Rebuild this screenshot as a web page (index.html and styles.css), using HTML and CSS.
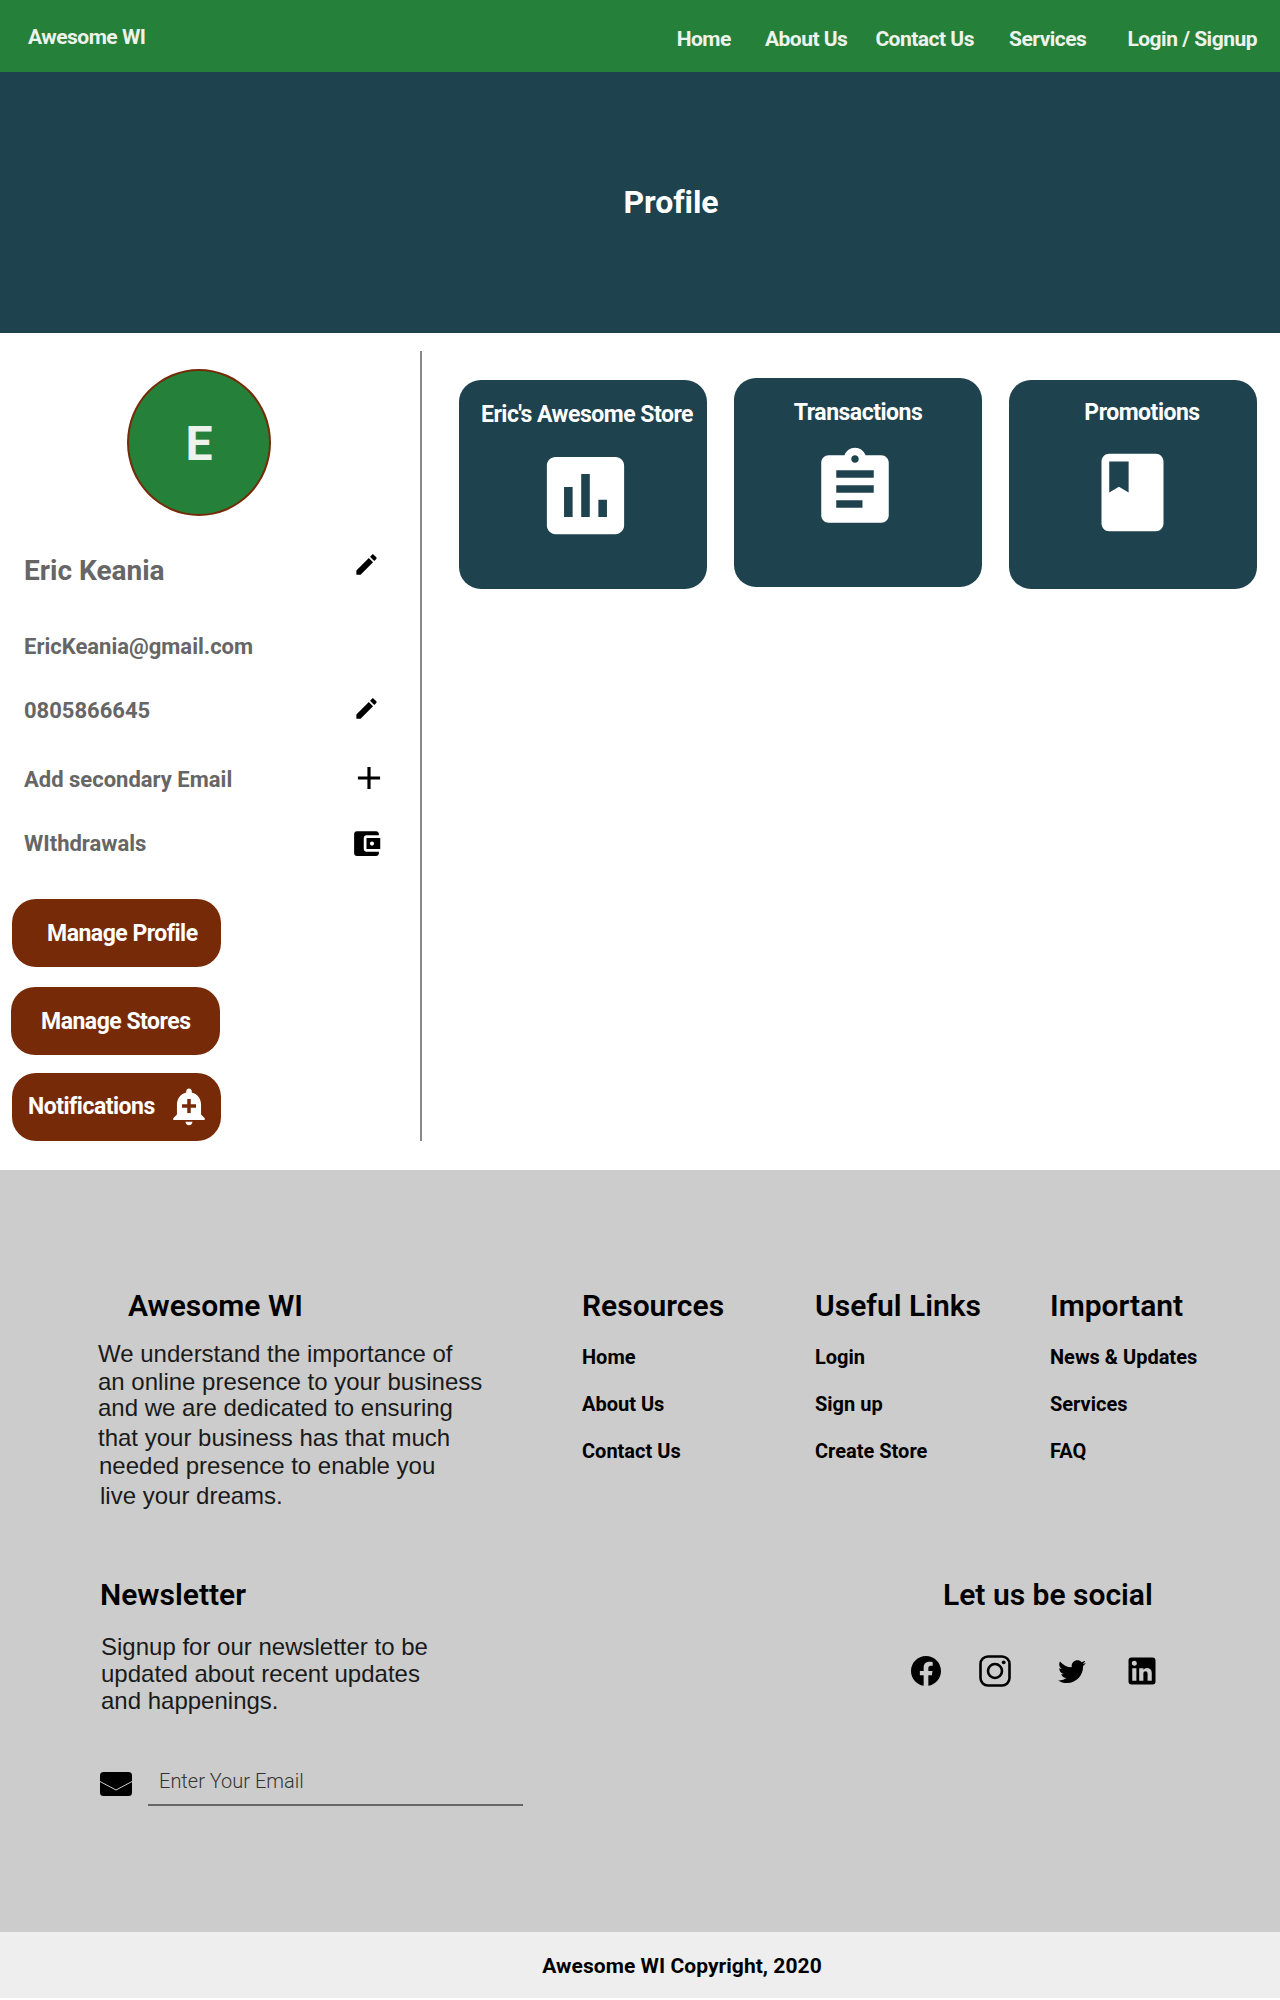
FILE: index.html
```html
<!DOCTYPE html>
<html lang="en">
<head>
<meta charset="utf-8">
<title>Profile - Awesome WI</title>
<link rel="stylesheet" href="styles.css">
</head>
<body>
<header class="navbar">
  <a class="brand">Awesome WI</a>
  <nav class="nav-links">
    <a class="nav-home">Home</a>
    <a class="nav-about">About Us</a>
    <a class="nav-contact">Contact Us</a>
    <a class="nav-services">Services</a>
    <a class="nav-login">Login / Signup</a>
  </nav>
</header>
<section class="hero"><h1>Profile</h1></section>
<main class="profile">
  <aside class="sidebar">
    <div class="avatar">E</div>
    <div class="row row-name"><span>Eric Keania</span>
      <svg class="icon-edit icon-edit-high" viewBox="0 0 24 24"><path d="M3 17.25V21h3.75L17.81 9.94l-3.75-3.75L3 17.25zM20.71 7.04c.39-.39.39-1.02 0-1.41l-2.34-2.34c-.39-.39-1.02-.39-1.41 0l-1.83 1.83 3.75 3.75 1.83-1.83z"/></svg>
    </div>
    <div class="row row-email"><span>EricKeania@gmail.com</span></div>
    <div class="row row-phone"><span>0805866645</span>
      <svg class="icon-edit" viewBox="0 0 24 24"><path d="M3 17.25V21h3.75L17.81 9.94l-3.75-3.75L3 17.25zM20.71 7.04c.39-.39.39-1.02 0-1.41l-2.34-2.34c-.39-.39-1.02-.39-1.41 0l-1.83 1.83 3.75 3.75 1.83-1.83z"/></svg>
    </div>
    <div class="row row-add"><span>Add secondary Email</span>
      <svg class="icon-add" viewBox="0 0 24 24"><path d="M19 13h-6v6h-2v-6H5v-2h6V5h2v6h6v2z"/></svg>
    </div>
    <div class="row row-withdraw"><span>WIthdrawals</span>
      <svg class="icon-wallet" viewBox="0 0 24 24"><path d="M21 18v1c0 1.1-.9 2-2 2H5c-1.11 0-2-.9-2-2V5c0-1.1.89-2 2-2h14c1.1 0 2 .9 2 2v1h-9c-1.11 0-2 .9-2 2v8c0 1.1.89 2 2 2h9zm-9-2h10V8H12v8zm4-2.5c-.83 0-1.5-.67-1.5-1.5s.67-1.5 1.5-1.5 1.5.67 1.5 1.5-.67 1.5-1.5 1.5z"/></svg>
    </div>
    <a class="btn btn-profile">Manage Profile</a>
    <a class="btn btn-stores">Manage Stores</a>
    <a class="btn btn-notify"><span>Notifications</span>
      <svg class="icon-bell" viewBox="0 0 24 24"><path d="M10.01 21.01c0 1.1.89 1.99 1.99 1.99s1.99-.89 1.99-1.99h-3.98zm8.87-4.19V11c0-3.25-2.25-5.97-5.29-6.69v-.72C13.59 2.71 12.88 2 12 2s-1.59.71-1.59 1.59v.72C7.37 5.03 5.12 7.75 5.12 11v5.82L3 18.94V20h18v-1.06l-2.12-2.12zM16 13.01h-3v3h-2v-3H8V11h3V8h2v3h3v2.01z"/></svg>
    </a>
  </aside>
  <section class="cards">
    <article class="card card-store">
      <h2>Eric's Awesome Store</h2>
      <svg viewBox="0 0 24 24"><path d="M19 3H5c-1.1 0-2 .9-2 2v14c0 1.1.9 2 2 2h14c1.1 0 2-.9 2-2V5c0-1.1-.9-2-2-2zM9 17H7v-7h2v7zm4 0h-2V7h2v10zm4 0h-2v-4h2v4z"/></svg>
    </article>
    <article class="card card-trans">
      <h2>Transactions</h2>
      <svg viewBox="0 0 24 24"><path d="M19 3h-4.18C14.4 1.84 13.3 1 12 1c-1.3 0-2.4.84-2.82 2H5c-1.1 0-2 .9-2 2v14c0 1.1.9 2 2 2h14c1.1 0 2-.9 2-2V5c0-1.1-.9-2-2-2zm-7 0c.55 0 1 .45 1 1s-.45 1-1 1-1-.45-1-1 .45-1 1-1zm2 14H7v-2h7v2zm3-4H7v-2h10v2zm0-4H7V7h10v2z"/></svg>
    </article>
    <article class="card card-promo">
      <h2>Promotions</h2>
      <svg viewBox="0 0 24 24"><path d="M18 2H6c-1.1 0-2 .9-2 2v16c0 1.1.9 2 2 2h12c1.1 0 2-.9 2-2V4c0-1.1-.9-2-2-2zM6 4h5v8l-2.5-1.5L6 12V4z"/></svg>
    </article>
  </section>
</main>
<footer class="footer">
  <div class="footer-top">
    <div class="about">
      <h3 class="about-title">Awesome WI</h3>
      <p class="about-text">
        <span class="line">We understand the importance of</span>
        <span class="line gap-1">an online presence to your business</span>
        <span class="line pull-1">and we are dedicated to ensuring</span>
        <span class="line gap-3">that your business has that much</span>
        <span class="line gap-1 nudge-1">needed presence to enable you</span>
        <span class="line gap-3 nudge-2">live your dreams.</span>
      </p>
    </div>
    <div class="links links-resources">
      <h3>Resources</h3>
      <ul><li>Home</li><li>About Us</li><li>Contact Us</li></ul>
    </div>
    <div class="links links-useful">
      <h3>Useful Links</h3>
      <ul><li>Login</li><li>Sign up</li><li>Create Store</li></ul>
    </div>
    <div class="links">
      <h3>Important</h3>
      <ul><li>News &amp; Updates</li><li>Services</li><li>FAQ</li></ul>
    </div>
  </div>
  <div class="footer-bottom">
    <div class="newsletter">
      <h3>Newsletter</h3>
      <p class="news-text">
        <span class="line">Signup for our newsletter to be</span>
        <span class="line">updated about recent updates</span>
        <span class="line">and happenings.</span>
      </p>
      <form class="news-form">
        <svg class="icon-mail" viewBox="0 0 32 24"><rect width="32" height="24" rx="3.5"/><path d="M0 9.5l16 8.5 16-8.5" fill="none" stroke="#ccc" stroke-width="1"/></svg>
        <input class="news-input" type="text" placeholder="Enter Your Email">
      </form>
    </div>
    <div class="social">
      <h3>Let us be social</h3>
      <div class="social-icons">
        <svg class="s-fb" viewBox="0 0 24 24"><path d="M12 2C6.477 2 2 6.477 2 12c0 4.991 3.657 9.128 8.438 9.879V14.89h-2.54V12h2.54V9.797c0-2.506 1.492-3.89 3.777-3.89 1.094 0 2.238.195 2.238.195v2.46h-1.26c-1.243 0-1.63.771-1.63 1.562V12h2.773l-.443 2.89h-2.33v6.989C18.343 21.129 22 16.99 22 12c0-5.523-4.477-10-10-10z"/></svg>
        <svg class="s-ig" viewBox="0 0 32 32"><rect x="1.5" y="1.5" width="29" height="29" rx="7.5" fill="none" stroke="#000" stroke-width="2.6"/><circle cx="16" cy="16" r="7" fill="none" stroke="#000" stroke-width="2.6"/><circle cx="24.7" cy="7.3" r="1.9"/></svg>
        <svg class="s-tw" viewBox="0 0 24 24"><path d="M22.46 6c-.77.35-1.6.58-2.46.69.88-.53 1.56-1.37 1.88-2.38-.83.5-1.75.85-2.72 1.05C18.37 4.5 17.26 4 16 4c-2.35 0-4.27 1.92-4.27 4.29 0 .34.04.67.11.98C8.28 9.09 5.11 7.38 3 4.79c-.37.63-.58 1.37-.58 2.15 0 1.49.75 2.81 1.91 3.56-.71 0-1.37-.2-1.95-.5v.03c0 2.08 1.48 3.82 3.44 4.21a4.22 4.22 0 0 1-1.93.07 4.28 4.28 0 0 0 4 2.98 8.521 8.521 0 0 1-5.33 1.84c-.34 0-.68-.02-1.02-.06C3.44 20.29 5.7 21 8.12 21 16 21 20.33 14.46 20.33 8.79c0-.19 0-.37-.01-.56.84-.6 1.56-1.36 2.14-2.23z"/></svg>
        <svg class="s-in" viewBox="0 0 24 24"><path d="M19 3a2 2 0 0 1 2 2v14a2 2 0 0 1-2 2H5a2 2 0 0 1-2-2V5a2 2 0 0 1 2-2h14m-.5 15.5v-5.3a3.26 3.26 0 0 0-3.26-3.26c-.85 0-1.84.52-2.32 1.3v-1.11h-2.79v8.37h2.79v-4.93c0-.77.62-1.4 1.39-1.4a1.4 1.4 0 0 1 1.4 1.4v4.93h2.79M6.88 8.56a1.68 1.68 0 0 0 1.68-1.68c0-.93-.75-1.69-1.68-1.69a1.69 1.69 0 0 0-1.69 1.69c0 .93.76 1.68 1.69 1.68m1.39 9.94v-8.37H5.5v8.37h2.77z"/></svg>
      </div>
    </div>
  </div>
</footer>
<div class="copyright">Awesome WI Copyright, 2020</div>
</body>
</html>
```

FILE: styles.css
```css
* { box-sizing: border-box; }
body { margin: 0; background: #fff; font-family: "Roboto", "Liberation Sans", sans-serif; color: #000; }
h1, h2, h3, p, ul { margin: 0; padding: 0; }
ul { list-style: none; }
svg { display: block; flex: none; }

.navbar { height: 72px; background: #258039; display: flex; justify-content: space-between; color: #eef2ec; font-weight: 700; }
.brand { font-size: 21px; letter-spacing: -0.5px; margin: 25px 0 0 28px; line-height: 24px; }
.nav-links { display: flex; font-size: 21px; letter-spacing: -0.5px; line-height: 24px; padding-top: 27px; padding-right: 23px; }
.nav-about { margin-left: 34px; }
.nav-contact { margin-left: 28px; }
.nav-services { margin-left: 35px; }
.nav-login { margin-left: 41px; }

.hero { height: 261px; background: #1e424e; display: flex; justify-content: center; padding: 111px 0 0 0; }
.hero h1 { font-size: 32px; line-height: 38px; font-weight: 700; color: #fff; margin-left: 62px; letter-spacing: -0.1px; }

.profile { display: flex; align-items: flex-start; padding: 18px 0 29px; }
.sidebar { width: 422px; height: 790px; border-right: 2px solid #888; display: flex; flex-direction: column; align-items: flex-start; flex: none; }
.avatar { width: 144px; height: 147px; margin: 18px 0 0 127px; padding-top: 2px; border-radius: 50%; background: #258039; border: 2px solid #762a08; color: #eef2ec; font-size: 48px; font-weight: 700; display: flex; align-items: center; justify-content: center; }
.row { width: 380px; height: 48px; padding-left: 24px; display: flex; align-items: center; justify-content: space-between; color: #666; font-size: 22px; font-weight: 700; }
.row-name { margin-top: 30px; font-size: 28px; }
.row-email { margin-top: 28px; }
.row-phone { margin-top: 16px; }
.row-add { margin-top: 21px; }
.row-withdraw { margin-top: 16px; }
.icon-edit { width: 27px; height: 27px; margin-bottom: 4px; }
.icon-edit-high { margin-bottom: 12px; }
.icon-add { width: 38px; height: 38px; margin: 0 -8px 2px 0; }
.icon-wallet { width: 33px; height: 33px; margin-right: -3px; }

.btn { width: 209px; height: 68px; background: #762a08; border-radius: 24px; color: #fff; font-size: 23px; font-weight: 700; letter-spacing: -0.5px; display: flex; align-items: center; }
.btn-profile { margin: 32px 0 0 12px; padding-left: 35px; }
.btn-stores { margin: 20px 0 0 11px; padding-left: 30px; }
.btn-notify { margin: 18px 0 0 12px; padding: 0 0 2px 16px; }
.icon-bell { width: 42px; height: 42px; fill: #fff; margin-left: 13px; margin-top: -1px; }

.cards { display: flex; align-items: flex-start; gap: 27px; margin-left: 37px; }
.card { width: 248px; height: 209px; background: #1e424e; border-radius: 22px; display: flex; flex-direction: column; align-items: center; margin-top: 29px; color: #fff; }
.card h2 { font-size: 23px; line-height: 24px; font-weight: 700; letter-spacing: -0.5px; white-space: nowrap; }
.card svg { fill: #fff; }
.card-store { padding-top: 23px; }
.card-store h2 { margin-left: 8px; }
.card-store svg { width: 103px; height: 103px; margin: 17px 0 0 4px; }
.card-trans { margin-top: 27px; padding-top: 23px; }
.card-trans svg { width: 90px; height: 90px; margin: 19px 0 0 -6px; }
.card-promo { padding-top: 21px; }
.card-promo h2 { margin-left: 18px; }
.card-promo svg { width: 93px; height: 93px; margin: 21px 0 0 -1px; }

.footer { height: 762px; background: #ccc; padding: 118px 0 0 98px; }
.footer h3 { font-size: 30px; line-height: 36px; font-weight: 600; color: #000; }
.footer-top { display: flex; }
.about { width: 484px; }
.about-title { margin-left: 30px; }
.about-text, .news-text { font-family: "Liberation Sans", Arial, sans-serif; font-size: 24px; color: #1a1a1a; }
.about-text { margin-top: 16px; }
.line { display: block; line-height: 27px; white-space: nowrap; }
.gap-1 { margin-top: 1px; }
.gap-3 { margin-top: 3px; }
.pull-1 { margin-top: -1px; }
.nudge-1 { margin-left: 1px; }
.nudge-2 { margin-left: 2px; }
.links { font-size: 20px; font-weight: 700; }
.links-resources { width: 233px; }
.links-useful { width: 235px; }
.links ul { margin-top: 21px; display: flex; flex-direction: column; gap: 23px; line-height: 24px; }

.footer-bottom { display: flex; margin-top: 68px; }
.newsletter { width: 810px; }
.newsletter h3 { margin-left: 2px; }
.news-text { margin: 20px 0 0 3px; }
.news-form { display: flex; align-items: flex-start; margin-top: 40px; }
.icon-mail { width: 32px; height: 24px; margin: 18px 0 0 2px; }
.news-input { width: 375px; height: 52px; margin-left: 16px; padding: 4px 0 0 11px; border: 0; border-bottom: 2px solid #666; background: transparent; outline: none; font-family: "Roboto", sans-serif; font-size: 20px; font-weight: 300; color: #333; }
.news-input::placeholder { color: #333; opacity: 1; }
.social h3 { margin-left: 35px; white-space: nowrap; }
.social-icons { display: flex; align-items: center; margin-top: 40px; }
.s-fb { width: 36px; height: 36px; }
.s-ig { width: 32px; height: 32px; margin-left: 35px; }
.s-tw { width: 32px; height: 32px; margin-left: 45px; }
.s-in { width: 36px; height: 36px; margin-left: 36px; }

.copyright { height: 66px; background: #eee; display: flex; align-items: center; justify-content: center; font-size: 21px; font-weight: 700; letter-spacing: 0.05px; padding: 2px 0 0 84px; }
```
